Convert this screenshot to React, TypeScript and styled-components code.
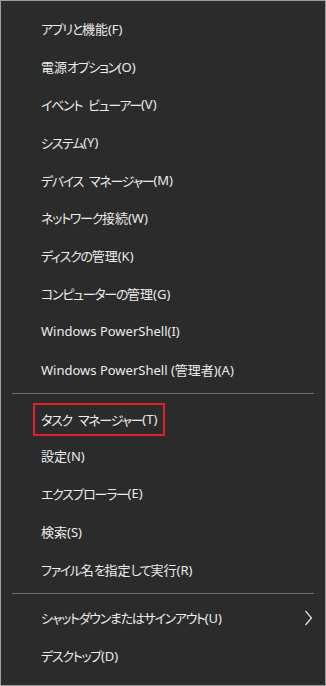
import React from "react";
import styled, { createGlobalStyle } from "styled-components";

const Global = createGlobalStyle`
  html, body { margin: 0; padding: 0; background: #2b2b2b; }
  * { box-sizing: border-box; }
`;

const Menu = styled.div`
  width: 326px;
  height: 686px;
  background: #2b2b2b;
  border: 1px solid #9d9d9d;
  padding-top: 9px;
  display: flex;
  flex-direction: column;
  font-family: "Noto Sans", "Noto Sans CJK JP", sans-serif;
  font-size: 13px;
  font-feature-settings: "palt" 1;
  color: #ececec;
`;

const Row = styled.div`
  height: 37.8px;
  flex: none;
  display: flex;
  align-items: center;
  padding-left: 40px;
  padding-right: 12px;
  justify-content: space-between;
`;

const Label = styled.span<{ $highlight?: boolean }>`
  display: inline-flex;
  align-items: center;
  white-space: pre;
  ${(p) =>
    p.$highlight
      ? `
    height: 33px;
    margin-top: 3px;
    margin-left: -8px;
    padding: 0 6px;
    border: 2px solid #e3202c;
  `
      : ""}
`;

const Kana = styled.span`
  letter-spacing: -1.3px;
  word-spacing: 4px;
`;

const Separator = styled.div`
  height: 11px;
  flex: none;
  display: flex;
  align-items: center;
  padding: 0 11px;
  &::before {
    content: "";
    flex: 1;
    height: 1px;
    background: #6f6f6f;
  }
`;

const Chevron = () => (
  <svg width="9" height="16" viewBox="0 0 9 16" fill="none">
    <path d="M1.5 1 L7.5 8 L1.5 15" stroke="#e4e4e4" strokeWidth="1.2" />
  </svg>
);

const KANA_RUN = /([\u3040-\u30ff](?:[\u3040-\u30ff ]*[\u3040-\u30ff])?)/;

const renderText = (s: string) =>
  s.split(KANA_RUN).map((part, i) =>
    i % 2 === 1 ? <Kana key={i}>{part}</Kana> : <React.Fragment key={i}>{part}</React.Fragment>
  );

type Item = { label: string; highlight?: boolean; submenu?: boolean } | "sep";

const items: Item[] = [
  { label: "アプリと機能(F)" },
  { label: "電源オプション(O)" },
  { label: "イベント ビューアー(V)" },
  { label: "システム(Y)" },
  { label: "デバイス マネージャー(M)" },
  { label: "ネットワーク接続(W)" },
  { label: "ディスクの管理(K)" },
  { label: "コンピューターの管理(G)" },
  { label: "Windows PowerShell(I)" },
  { label: "Windows PowerShell (管理者)(A)" },
  "sep",
  { label: "タスク マネージャー(T)", highlight: true },
  { label: "設定(N)" },
  { label: "エクスプローラー(E)" },
  { label: "検索(S)" },
  { label: "ファイル名を指定して実行(R)" },
  "sep",
  { label: "シャットダウンまたはサインアウト(U)", submenu: true },
  { label: "デスクトップ(D)" },
];

export default function App() {
  return (
    <>
      <Global />
      <Menu>
        {items.map((it, i) =>
          it === "sep" ? (
            <Separator key={i} />
          ) : (
            <Row key={i}>
              <Label $highlight={it.highlight}>{renderText(it.label)}</Label>
              {it.submenu && <Chevron />}
            </Row>
          )
        )}
      </Menu>
    </>
  );
}
